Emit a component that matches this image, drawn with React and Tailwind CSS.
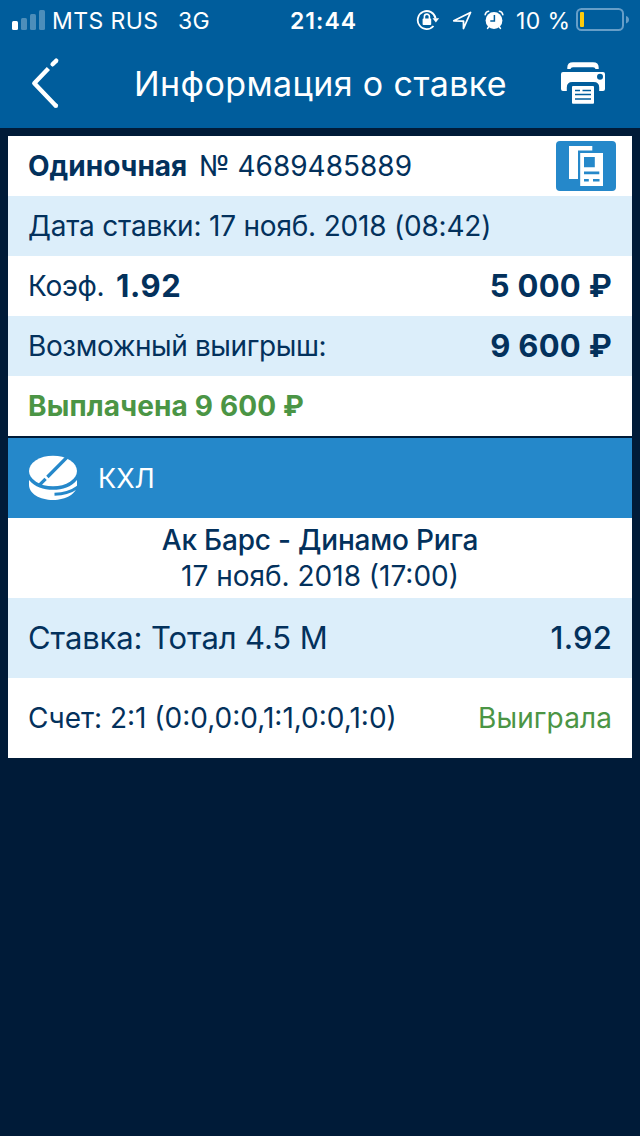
import React from 'react';

// Status bar icons
const SignalIcon = () => (
  <svg className="block" width="33" height="20" viewBox="0 0 33 20" fill="#fff">
    <rect x="0" y="11" width="6" height="9" rx="1.5" />
    <rect x="9" y="8" width="6" height="12" rx="1.5" opacity="0.3" />
    <rect x="18" y="4" width="6" height="16" rx="1.5" opacity="0.3" />
    <rect x="27" y="0" width="6" height="20" rx="1.5" opacity="0.3" />
  </svg>
);

const RotationLockIcon = () => (
  <svg className="block" width="24" height="22" viewBox="0 0 24 22" fill="none" stroke="#fff">
    <path d="M19.6 9.5A9 9 0 1 0 17.5 17" strokeWidth="1.8" />
    <path d="M16.5 9.2h6.6l-3.2 4.2z" fill="#fff" stroke="none" />
    <rect x="6.6" y="9.6" width="8.6" height="6.4" rx="0.8" fill="#fff" stroke="none" />
    <path d="M8.4 10V7.6a2.5 2.5 0 0 1 5 0V10" strokeWidth="1.6" />
  </svg>
);

const LocationIcon = () => (
  <svg className="block" width="20" height="20" viewBox="0 0 20 20" fill="none" stroke="#fff" strokeWidth="1.8" strokeLinejoin="round">
    <path d="M18.5 2.5L11.5 18.5v-7.4L1.8 10.8z" />
  </svg>
);

const AlarmIcon = () => (
  <svg className="block" width="20" height="20" viewBox="0 0 20 20" fill="none">
    <circle cx="10" cy="10.5" r="8.4" fill="#fff" />
    <path d="M1.2 4.6Q1.8 1.7 4.6 1.3M15.4 1.3Q18.2 1.7 18.8 4.6" stroke="#fff" strokeWidth="1.6" strokeLinecap="round" />
    <path d="M4.6 17l-1 1.4M15.4 17l1 1.4" stroke="#fff" strokeWidth="1.6" strokeLinecap="round" />
    <path d="M10.4 5v6.1H6.3" stroke="#005d9c" strokeWidth="1.5" />
  </svg>
);

const BatteryIcon = () => (
  <svg className="block" width="54" height="24" viewBox="0 0 54 24" fill="none">
    <rect x="1" y="1" width="46" height="21" rx="4.5" stroke="#669ec8" strokeWidth="2" />
    <path d="M50 8q3 1 3 3.7t-3 3.7z" fill="#669ec8" />
    <rect x="4" y="4" width="4" height="15" rx="1" fill="#fecb0b" />
  </svg>
);

// Header icons
const BackIcon = () => (
  <svg className="block" width="30" height="52" viewBox="0 0 30 52" fill="none" stroke="#fff" strokeWidth="4.4" strokeLinejoin="round">
    <path d="M26.2 3.7l-3.6 3.6" strokeLinecap="round" />
    <path d="M18.4 11.5L4.3 26.2 26 49" />
    <circle cx="25.900" cy="48.700" r="2.200" fill="#fff" stroke="none" />
  </svg>
);

const PrinterIcon = () => (
  <svg className="block" width="44" height="42" viewBox="0 0 44 42" fill="#fff">
    <path d="M6.3 7V5.5Q6.3.2 12 .2h20Q37.7.2 37.7 5.5V7h-3.2Q34.3 5.3 32 5.3H12Q9.7 5.3 9.5 7z" />
    <path d="M2 10h40q2 0 2 2v15q0 2-2 2h-3.8v-3.5Q38.2 20 32.7 20H11.3Q5.8 20 5.8 25.5V29H2q-2 0-2-2V12q0-2 2-2z" />
    <circle cx="39" cy="14.8" r="3" fill="#005d9c" />
    <rect x="11" y="24" width="22" height="17.8" rx="1" />
    <path d="M14 28.5h5M21.5 28.5h8.5M14 32.5h16M14 37h16" stroke="#005d9c" strokeWidth="1.5" />
  </svg>
);

const DocumentsIcon = () => (
  <svg className="block" width="34" height="40" viewBox="0 0 34 40">
    <path d="M0 0h23.3v4.6H9v28.4H0z" fill="#fff" />
    <path d="M11.2 7H34v33H11.2z" fill="#fff" />
    <path d="M15 11h10.8v10.2H15zM15 25.6h15.3v2.6H15zM15 33h4.8v2.6H15zM24 33h6.5v2.6H24z" fill="#2588ca" />
  </svg>
);

const PuckIcon = () => (
  <svg className="block" width="50" height="46" viewBox="0 0 50 46" fill="none">
    <path d="M1 25C7 32 15 34.800 25 34.800S43 32 49 25V30C49 38.500 38 45 25 45S1 38.500 1 30z" fill="#fff" />
    <ellipse cx="25" cy="16" rx="24" ry="15.300" fill="#fff" />
    <path d="M40.400.8L19.400 22M17.600 23.800L10.800 30.600" stroke="#2588ca" strokeWidth="3.300" />
    <path d="M26.500 39.300C35 39.100 43 37.200 50 32" stroke="#2588ca" strokeWidth="3" />
  </svg>
);

function App() {
  return (
    <div className="min-h-screen w-[640px] overflow-hidden bg-[#001b38] font-['Inter','Noto_Sans',sans-serif] text-[#03315c]">
      {/* Header */}
      <header className="h-32 bg-[#005d9c] text-white">
        <div className="flex h-10 items-center whitespace-nowrap text-[23px]">
          <div className="ml-3 w-[33px]"><SignalIcon /></div>
          <span className="ml-[7px] w-[126px] pt-[2px] tracking-[0.4px]">MTS RUS</span>
          <span className="w-[112px] pt-[2px] tracking-[0.4px]">3G</span>
          <span className="w-[126px] pt-[2px] font-semibold tracking-[1px]">21:44</span>
          <div className="w-9"><RotationLockIcon /></div>
          <div className="w-[32px]"><LocationIcon /></div>
          <div className="w-8"><AlarmIcon /></div>
          <span className="w-[60px] pt-[2px] tracking-[0.4px]">10 %</span>
          <BatteryIcon />
        </div>
        <div className="flex h-[88px] items-center">
          <div className="ml-[30px] w-[104px] pb-[2px]"><BackIcon /></div>
          <h1 className="w-[427px] whitespace-nowrap pb-[2px] text-[34px] tracking-[0.4px]">Информация о ставке</h1>
          <div className="pb-[2px]"><PrinterIcon /></div>
        </div>
      </header>

      <main className="px-2 pt-2 text-[28px] whitespace-nowrap">
        {/* Bet details */}
        <section>
          <div className="flex h-[60px] items-center bg-white pl-5 pr-4">
            <span className="w-[171px] font-bold">Одиночная</span>
            <span>№ 4689485889</span>
            <div className="ml-auto flex h-[50px] w-[60px] items-center justify-center rounded bg-[#2588ca]">
              <DocumentsIcon />
            </div>
          </div>
          <div className="flex h-[60px] items-center bg-[#dceefa] px-5">
            <span className="tracking-[-0.2px]">Дата ставки: 17 нояб. 2018 (08:42)</span>
          </div>
          <div className="flex h-[60px] items-center bg-white px-5">
            <span className="w-[88px] tracking-[-0.3px]">Коэф.</span>
            <span className="text-[31px] font-bold tracking-[0.6px]">1.92</span>
            <span className="ml-auto text-[31px] font-bold tracking-[0.3px]">5 000 ₽</span>
          </div>
          <div className="flex h-[60px] items-center justify-between bg-[#dceefa] px-5">
            <span className="tracking-[-0.4px]">Возможный выигрыш:</span>
            <span className="text-[31px] font-bold tracking-[0.3px]">9 600 ₽</span>
          </div>
          <div className="flex h-[60px] items-center bg-white px-5 font-bold text-[#4b9545]">
            <span className="tracking-[0.15px]">Выплачена 9 600 ₽</span>
          </div>
        </section>

        {/* Event */}
        <section className="mt-[2px] bg-white">
          <div className="flex h-20 items-center bg-[#2588ca] pl-5 text-white">
            <div className="w-[70px]"><PuckIcon /></div>
            <span className="pt-[2px] text-[27px]">КХЛ</span>
          </div>
          <div className="flex h-20 flex-col items-center pt-1 leading-9">
            <span className="font-medium tracking-[-0.2px]">Ак Барс - Динамо Рига</span>
            <span>17 нояб. 2018 (17:00)</span>
          </div>
          <div className="flex h-20 items-center justify-between bg-[#dceefa] px-5 text-[31px]">
            <span className="tracking-[-0.1px]">Ставка: Тотал 4.5 М</span>
            <span className="font-medium tracking-[0.2px]">1.92</span>
          </div>
          <div className="flex h-20 items-center justify-between px-5">
            <span>Счет: 2:1 (0:0,0:0,1:1,0:0,1:0)</span>
            <span className="tracking-[0.1px] text-[#4b9545]">Выиграла</span>
          </div>
        </section>
      </main>
    </div>
  );
}

export default App;
